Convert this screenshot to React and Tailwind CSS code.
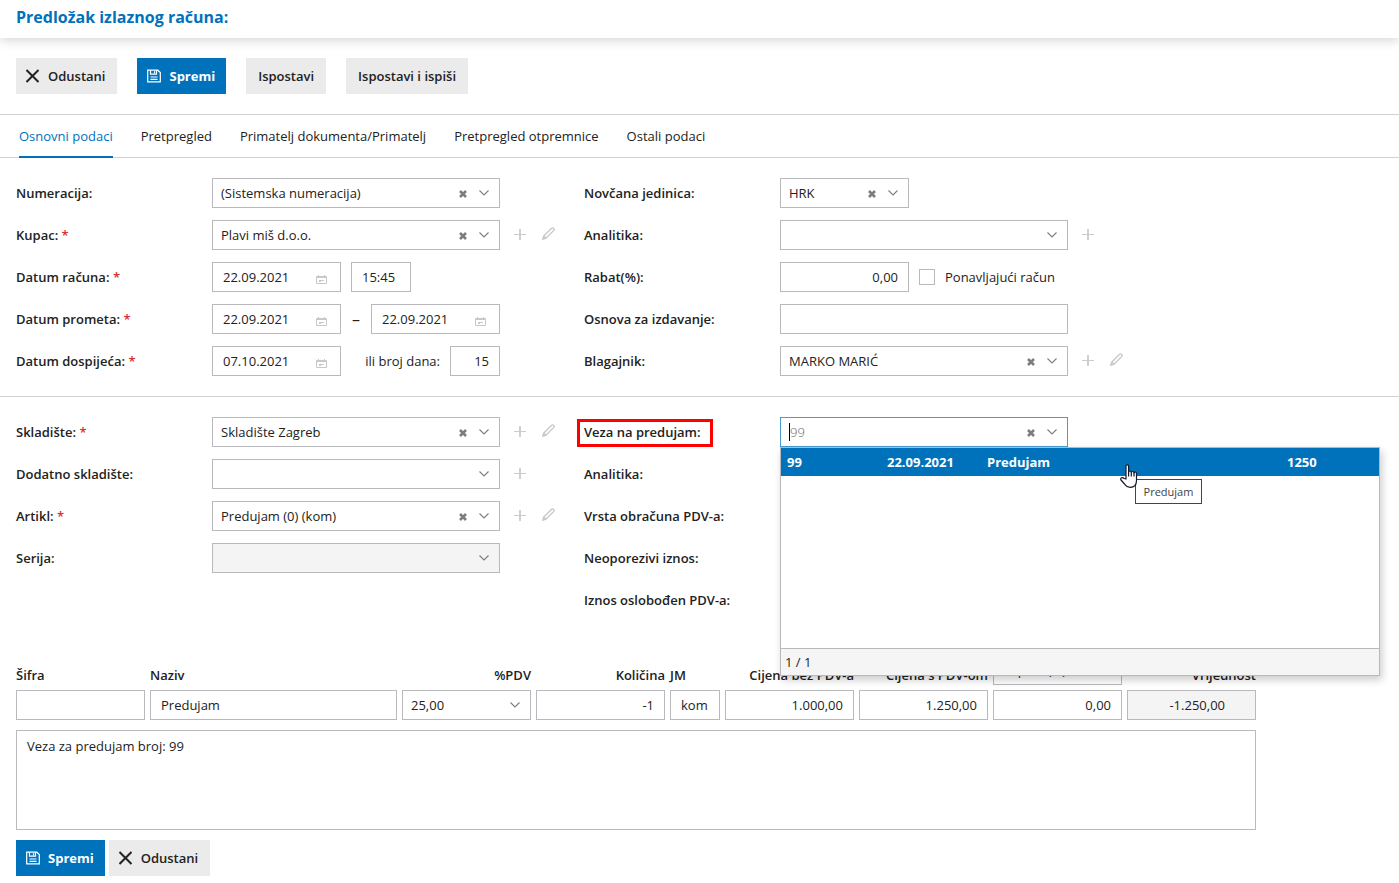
import React from 'react';

const boxClass = 'h-[30px] border border-[#b9b9bd] bg-white';
const textClass = 'h-[30px] border border-[#b9b9bd] bg-white px-[10px] text-[13px] text-[#222] outline-none';

function CloseIcon() {
  return (
    <svg width="14" height="14" viewBox="0 0 14 14" fill="none" stroke="#222" strokeWidth="2" aria-hidden="true">
      <path d="M.5 1l12 12M12.500 1L.5 13" />
    </svg>
  );
}

function SaveIcon() {
  return (
    <svg width="14" height="14" viewBox="0 0 14 14" fill="none" stroke="#fff" strokeWidth="1.2" aria-hidden="true">
      <path d="M.7 1.2h10.1l2.5 2.4v9.2H.7z" />
      <path d="M3.5 1.2v4h6v-4M7.5 2.2v2M3.5 8h7M3.5 10.3h7" />
    </svg>
  );
}

function ClearIcon() {
  return (
    <svg width="8" height="8" viewBox="0 0 8 8" fill="none" stroke="#7d7d7d" strokeWidth="2.6" aria-hidden="true">
      <path d="M1 1l6 6M7 1L1 7" />
    </svg>
  );
}

function ChevronIcon() {
  return (
    <svg width="10" height="6" viewBox="0 0 10 6" fill="none" stroke="#808080" strokeWidth="1.2" aria-hidden="true">
      <path d="M.5 .5L5 5L9.5 .5" />
    </svg>
  );
}

function CalendarIcon() {
  return (
    <svg width="11" height="9" viewBox="0 0 11 9" fill="none" stroke="#c6c8ca" aria-hidden="true">
      <path d="M.5 1.5h10v7H.5zM.5 2.5h10M2.500 0v2M8.500 0v2M3 5.5h5M3 6.5h2" />
    </svg>
  );
}

function PlusIcon() {
  return (
    <svg width="12" height="12" viewBox="0 0 12 12" fill="none" stroke="#c9cbcd" aria-hidden="true">
      <path d="M0 6.500h12" />
      <path d="M6 1v11" strokeWidth="1.8" />
    </svg>
  );
}

function PencilIcon() {
  return (
    <svg width="13" height="13" viewBox="0 0 13 13" fill="none" stroke="#c4c6c8" strokeWidth="1.3" aria-hidden="true">
      <path d="M.8 12.2l.9-3.2L9.6 1.200q.9-.8 2 .2t.2 2L4 11.200z" />
      <path d="M1.700 9l2.300 2.200" />
    </svg>
  );
}

function HandCursor() {
  return (
    <svg width="19" height="25" viewBox="0 0 19 25" fill="#fff" stroke="#111827" strokeWidth="1.2" strokeLinejoin="round" aria-hidden="true">
      <path d="M6 15V2.300q0-1.500 1.300-1.500t1.300 1.500V8q0-1 1.300-1t1.400 1.500q0-1 1.300-1t1.400 1.500q0-1 1.200-1t1.300 1.500v7q0 6.800-6.300 6.800-3.600 0-5.700-3.300L1 16q-.8-1.600 .6-2.200t2.500 .7z" />
      <path d="M8.600 8v4.500M11.300 8.500v4M14 9v3.500" />
    </svg>
  );
}

function Button({ primary, icon, children }) {
  return (
    <button
      type="button"
      className={
        primary
          ? 'flex h-9 items-center gap-2 bg-[#0072bc] pr-[11px] pl-[10px] font-bold text-white'
          : icon
            ? 'flex h-9 items-center gap-2 bg-[#ebebeb] pr-3 pl-[10px] font-semibold text-[#222]'
            : 'flex h-9 items-center bg-[#ebebeb] px-3 font-semibold text-[#222]'
      }
    >
      {icon}
      {children}
    </button>
  );
}

function Combo({ id, value = '', clear, disabled, width = 'w-[288px]' }) {
  return (
    <div className={`flex items-center border border-[#b9b9bd] h-[30px] pr-[10px] ${width} ${disabled ? 'bg-[#f4f4f4]' : 'bg-white'}`}>
      <select id={id} disabled={disabled} defaultValue={value} className="h-full min-w-0 flex-1 appearance-none bg-transparent pl-2 text-[#222] outline-none">
        <option>{value}</option>
      </select>
      {clear && (
        <button type="button" aria-label="Obriši" className="mr-3 shrink-0 pt-px">
          <ClearIcon />
        </button>
      )}
      <ChevronIcon />
    </div>
  );
}

function DateField({ id, value, label }) {
  return (
    <div className={`flex w-[129px] items-center pr-[13px] ${boxClass}`}>
      <input id={id} aria-label={label} defaultValue={value} className="h-full min-w-0 flex-1 pl-[10px] text-[#222] outline-none" />
      <button type="button" aria-label="Kalendar" className="shrink-0 pt-1">
        <CalendarIcon />
      </button>
    </div>
  );
}

function Actions({ edit }) {
  return (
    <div className="flex items-center gap-4 pb-[3px] pl-[14px]">
      <button type="button" aria-label="Dodaj"><PlusIcon /></button>
      {edit && <button type="button" aria-label="Uredi"><PencilIcon /></button>}
    </div>
  );
}

function Row({ id, label, required, marked, children }) {
  return (
    <div className="flex h-[30px] items-center">
      <div className="relative w-[196px] shrink-0">
        <label htmlFor={id} className="font-semibold">
          {label} {required && <span className="text-[#d9302c]">*</span>}
        </label>
        {marked && <span className="pointer-events-none absolute -top-[3px] -left-[7px] h-7 w-[136px] border-3 border-[#f00]" />}
      </div>
      {children}
    </div>
  );
}

function LookupPanel() {
  return (
    <div className="absolute top-[29px] -left-px z-10 flex h-[229px] w-[600px] flex-col border border-[#b9b9bd] bg-white shadow-[2px_4px_8px_rgba(0,0,0,0.2)]">
      <table className="w-full table-fixed bg-[#0072bc] text-left font-bold text-white">
        <tbody>
          <tr className="h-7">
            <td className="w-[100px] pl-[6px]">99</td>
            <td className="w-[100px] pl-[6px]">22.09.2021</td>
            <td className="w-[300px] pl-[6px]">Predujam</td>
            <td className="pl-[6px]">1250</td>
          </tr>
        </tbody>
      </table>
      <div className="flex-1" />
      <div className="flex h-[27px] items-center border-t border-[#b9b9bd] bg-[#f5f5f5] pl-1">1 / 1</div>
      <div role="tooltip" className="absolute top-[31px] left-[354px] flex h-[25px] w-[67px] items-center justify-center border border-[#444] bg-white text-[11px] text-[#444]">
        Predujam
      </div>
      <div className="absolute top-4 left-[339px]">
        <HandCursor />
      </div>
    </div>
  );
}

function LineField({ id, label, value, align = 'text-right', width = 'w-[129px]' }) {
  return (
    <div className={`flex flex-col ${width}`}>
      <label htmlFor={id} className={`h-[25px] font-semibold whitespace-nowrap ${align}`}>{label}</label>
      <input id={id} defaultValue={value} className={`w-full ${textClass} ${align}`} />
    </div>
  );
}

const tabs = ['Osnovni podaci', 'Pretpregled', 'Primatelj dokumenta/Primatelj', 'Pretpregled otpremnice', 'Ostali podaci'];

export default function App() {
  return (
    <div className="min-h-screen bg-white pb-[7px] font-['Open_Sans',sans-serif] text-[13px] leading-5 text-[#222]">
      <header className="flex h-[38px] items-center bg-white px-4 pb-1 shadow-[0_2px_12px_rgba(0,0,0,0.18)]">
        <h1 className="text-base font-bold text-[#0072bc]">Predložak izlaznog računa:</h1>
      </header>

      <div className="flex gap-5 px-4 py-5">
        <Button icon={<CloseIcon />}>Odustani</Button>
        <Button primary icon={<SaveIcon />}>Spremi</Button>
        <Button>Ispostavi</Button>
        <Button>Ispostavi i ispiši</Button>
      </div>

      <nav className="flex h-11 gap-7 border-y border-[#d2d2d2] px-[19px]">
        {tabs.map((tab, i) => (
          <a
            key={tab}
            href="#"
            className={i === 0 ? '-mb-px flex items-center border-b-2 border-[#0072bc] text-[#0072bc]' : 'flex items-center'}
          >
            {tab}
          </a>
        ))}
      </nav>

      <div className="flex border-b border-[#d2d2d2] px-4 py-5">
        <div className="flex w-[568px] shrink-0 flex-col gap-3">
          <Row id="numeracija" label="Numeracija:">
            <Combo id="numeracija" value="(Sistemska numeracija)" clear />
          </Row>
          <Row id="kupac" label="Kupac:" required>
            <Combo id="kupac" value="Plavi miš d.o.o." clear />
            <Actions edit />
          </Row>
          <Row id="datum-racuna" label="Datum računa:" required>
            <DateField id="datum-racuna" value="22.09.2021" />
            <input aria-label="Vrijeme" defaultValue="15:45" className={`ml-[10px] w-[60px] ${textClass}`} />
          </Row>
          <Row id="datum-prometa" label="Datum prometa:" required>
            <DateField id="datum-prometa" value="22.09.2021" />
            <span className="w-[30px] text-center text-base">–</span>
            <DateField id="datum-prometa-do" label="Datum prometa do" value="22.09.2021" />
          </Row>
          <Row id="datum-dospijeca" label="Datum dospijeća:" required>
            <DateField id="datum-dospijeca" value="07.10.2021" />
            <label htmlFor="broj-dana" className="w-[99px] text-right">ili broj dana:</label>
            <input id="broj-dana" defaultValue="15" className={`ml-[10px] w-[50px] text-right ${textClass}`} />
          </Row>
        </div>
        <div className="flex flex-col gap-3">
          <Row id="valuta" label="Novčana jedinica:">
            <Combo id="valuta" value="HRK" clear width="w-[129px]" />
          </Row>
          <Row id="analitika" label="Analitika:">
            <Combo id="analitika" />
            <Actions />
          </Row>
          <Row id="rabat" label="Rabat(%):">
            <input id="rabat" defaultValue="0,00" className={`w-[129px] text-right ${textClass}`} />
            <input id="ponavljajuci" type="checkbox" className="ml-[10px] size-4 appearance-none border border-[#b9b9bd] bg-white" />
            <label htmlFor="ponavljajuci" className="ml-[10px]">Ponavljajući račun</label>
          </Row>
          <Row id="osnova" label="Osnova za izdavanje:">
            <input id="osnova" className={`w-[288px] ${textClass}`} />
          </Row>
          <Row id="blagajnik" label="Blagajnik:">
            <Combo id="blagajnik" value="MARKO MARIĆ" clear />
            <Actions edit />
          </Row>
        </div>
      </div>

      <div className="flex px-4 pt-5">
        <div className="flex w-[568px] shrink-0 flex-col gap-3">
          <Row id="skladiste" label="Skladište:" required>
            <Combo id="skladiste" value="Skladište Zagreb" clear />
            <Actions edit />
          </Row>
          <Row id="dodatno" label="Dodatno skladište:">
            <Combo id="dodatno" />
            <Actions />
          </Row>
          <Row id="artikl" label="Artikl:" required>
            <Combo id="artikl" value="Predujam (0) (kom)" clear />
            <Actions edit />
          </Row>
          <Row id="serija" label="Serija:">
            <Combo id="serija" disabled />
          </Row>
        </div>
        <div className="flex flex-col gap-3">
          <Row id="veza" label="Veza na predujam:" marked>
            <div className="relative flex h-[30px] w-[288px] items-center border border-[#4a9bd0] bg-white pr-[10px] pl-2">
              <span className="h-[18px] w-px bg-black" />
              <input id="veza" placeholder="99" className="h-full min-w-0 flex-1 font-light outline-none placeholder:text-[#666]" />
              <button type="button" aria-label="Obriši" className="mr-3 shrink-0 pt-px"><ClearIcon /></button>
              <ChevronIcon />
              <LookupPanel />
            </div>
          </Row>
          <Row label="Analitika:" />
          <Row label="Vrsta obračuna PDV-a:" />
          <Row label="Neoporezivi iznos:" />
          <Row label="Iznos oslobođen PDV-a:" />
        </div>
      </div>

      <div className="flex flex-col gap-[10px] px-4 pt-[50px]">
        <div className="flex gap-[5px]">
          <LineField id="sifra" label="Šifra" align="text-left" />
          <LineField id="naziv" label="Naziv" value="Predujam" align="text-left" width="w-[247px]" />
          <div className="flex w-[129px] flex-col">
            <label htmlFor="pdv" className="h-[25px] text-right font-semibold">%PDV</label>
            <Combo id="pdv" value="25,00" width="w-full" />
          </div>
          <LineField id="kolicina" label="Količina" value="-1" />
          <LineField id="jm" label="JM" value="kom" align="text-left" width="w-[50px]" />
          <LineField id="cijena-bez" label="Cijena bez PDV-a" value="1.000,00" />
          <LineField id="cijena-s" label="Cijena s PDV-om" value="1.250,00" />
          <div className="flex w-[129px] flex-col justify-end gap-[5px]">
            <select aria-label="Vrsta popusta" className="-mt-[10px] h-[30px] w-full appearance-none border border-[#b9b9bd] bg-white pl-2">
              <option>Popust (%)</option>
            </select>
            <input aria-label="Popust" defaultValue="0,00" className={`w-full text-right ${textClass}`} />
          </div>
          <div className="flex w-[129px] flex-col">
            <label htmlFor="vrijednost" className="h-[25px] text-right font-semibold">Vrijednost</label>
            <input id="vrijednost" readOnly defaultValue="-1.250,00" className="h-[30px] w-full border border-[#b9b9bd] bg-[#f4f4f4] pr-[30px] text-right outline-none" />
          </div>
        </div>
        <textarea aria-label="Opis" defaultValue="Veza za predujam broj: 99" className="h-[100px] w-full max-w-[1240px] resize-none border border-[#b9b9bd] bg-white px-[10px] py-[5px] outline-none" />
        <div className="flex gap-1">
          <Button primary icon={<SaveIcon />}>Spremi</Button>
          <Button icon={<CloseIcon />}>Odustani</Button>
        </div>
      </div>
    </div>
  );
}
